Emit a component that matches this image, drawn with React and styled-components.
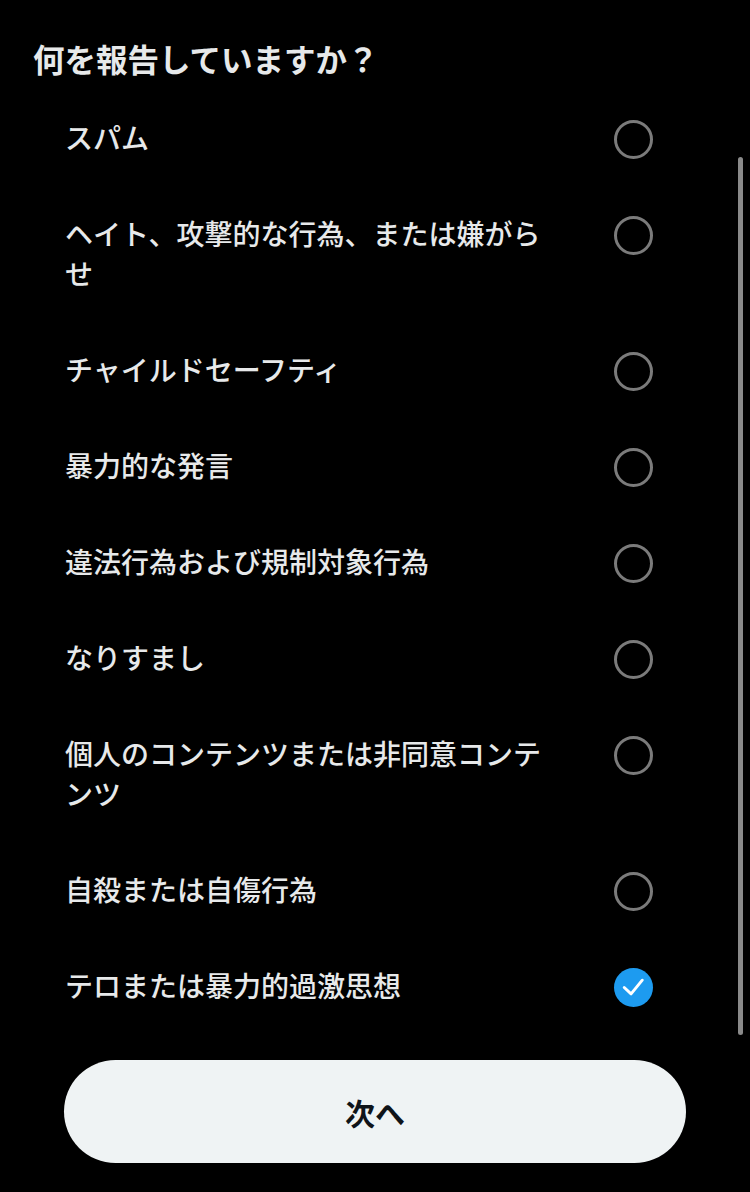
import React, { useState } from "react";
import styled, { createGlobalStyle } from "styled-components";

const GlobalStyle = createGlobalStyle`
	html, body {
		margin: 0;
		padding: 0;
		background: #000;
	}
	body {
		font-family: "Noto Sans CJK JP", "Noto Sans", sans-serif;
		color: #e7e9ea;
	}
`;

const Page = styled.div`
	width: 750px;
	height: 1192px;
	background: #000;
	display: flex;
	flex-direction: column;
	overflow: hidden;
`;

const Title = styled.h1`
	margin: 0;
	padding: 38px 0 13px 33px;
	font-size: 31.5px;
	line-height: 40px;
	font-weight: 700;
	color: #e7e9ea;
`;

const ListWrap = styled.div`
	position: relative;
	flex: 0 0 auto;
`;

const List = styled.div`
	display: flex;
	flex-direction: column;
`;

const Row = styled.label`
	display: flex;
	align-items: flex-start;
	justify-content: space-between;
	padding: 28px 97px 28px 65px;
	cursor: pointer;
`;

const Label = styled.span`
	max-width: 490px;
	margin: -2px 0 2px 0;
	font-size: 28px;
	line-height: 40px;
	font-weight: 500;
	color: #e7e9ea;
`;

const Radio = styled.span`
	flex: 0 0 auto;
	box-sizing: border-box;
	width: 39px;
	height: 39px;
	margin-top: 0.5px;
	border-radius: 50%;
	border: ${(p) => (p.checked ? "none" : "3px solid #7b7b7b")};
	background: ${(p) => (p.checked ? "#1d9bf0" : "transparent")};
	display: flex;
	align-items: center;
	justify-content: center;
`;

const ScrollThumb = styled.div`
	position: absolute;
	right: 7px;
	top: 66px;
	width: 5px;
	height: 878px;
	border-radius: 3px;
	background: #8a8a8a;
`;

const Footer = styled.div`
	padding: 25px 64px 0 64px;
`;

const NextButton = styled.button`
	width: 100%;
	height: 103px;
	border: none;
	border-radius: 52px;
	background: #eff3f4;
	color: #0f1419;
	font-family: "Noto Sans CJK JP", "Noto Sans", sans-serif;
	font-size: 30px;
	font-weight: 700;
	cursor: pointer;
`;

const options = [
	"スパム",
	"ヘイト、攻撃的な行為、または嫌がらせ",
	"チャイルドセーフティ",
	"暴力的な発言",
	"違法行為および規制対象行為",
	"なりすまし",
	"個人のコンテンツまたは非同意コンテンツ",
	"自殺または自傷行為",
	"テロまたは暴力的過激思想",
];

const Check = () => (
	<svg width="40" height="40" viewBox="0 0 40 40">
		<path
			d="M10.5 20.5 L17.5 27 L29 13"
			fill="none"
			stroke="#fff"
			strokeWidth="3"
			strokeLinecap="round"
			strokeLinejoin="round"
		/>
	</svg>
);

const App = () => {
	const [selected, setSelected] = useState(8);

	return (
		<Page>
			<GlobalStyle />
			<Title>何を報告していますか？</Title>
			<ListWrap>
				<List>
					{options.map((text, i) => (
						<Row key={text} onClick={() => setSelected(i)}>
							<Label>{text}</Label>
							<Radio checked={selected === i}>
								{selected === i && <Check />}
							</Radio>
						</Row>
					))}
				</List>
				<ScrollThumb />
			</ListWrap>
			<Footer>
				<NextButton>次へ</NextButton>
			</Footer>
		</Page>
	);
};

export default App;
